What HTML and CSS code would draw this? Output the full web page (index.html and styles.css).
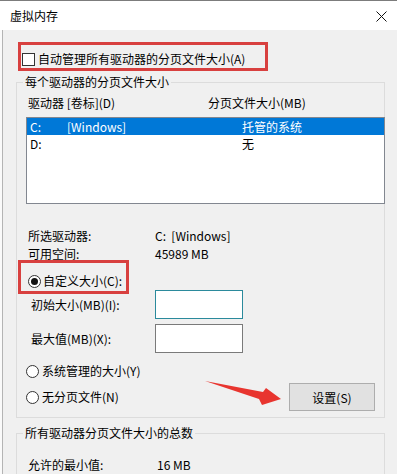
FILE: index.html
```html
<!DOCTYPE html>
<html lang="zh-CN">
  <head>
    <meta charset="UTF-8" />
    <meta name="viewport" content="width=device-width, initial-scale=1.0" />
    <title>虚拟内存</title>
    <link rel="stylesheet" href="styles.css">
  </head>
  <body>
    <div class="dialog">
      <div class="titlebar">
        <span class="title">虚拟内存</span>
        <svg class="close-icon" width="11" height="11" viewBox="0 0 11 11">
          <path d="M0.5 0.5 L10.5 10.5 M10.5 0.5 L0.5 10.5" stroke="#111" stroke-width="1" fill="none"/>
        </svg>
      </div>

      <div class="content">
        <div class="highlight auto-manage">
          <span class="checkbox"></span>
          <span>自动管理所有驱动器的分页文件大小(A)</span>
        </div>

        <fieldset class="group">
          <legend>每个驱动器的分页文件大小</legend>
          <div class="group-body">
            <div class="list-header">
              <span class="col-drive">驱动器 [卷标](D)</span>
              <span>分页文件大小(MB)</span>
            </div>

            <div class="listbox">
              <div class="list-row selected">
                <span>C:</span>
                <span>[Windows]</span>
                <span>托管的系统</span>
              </div>
              <div class="list-row">
                <span>D:</span>
                <span></span>
                <span>无</span>
              </div>
            </div>

            <div class="info-row first">
              <span class="info-label">所选驱动器:</span>
              <span>C:&nbsp;&nbsp;[Windows]</span>
            </div>
            <div class="info-row">
              <span class="info-label">可用空间:</span>
              <span>45989 MB</span>
            </div>

            <div class="highlight custom-size">
              <span class="radio checked"></span>
              <span>自定义大小(C):</span>
            </div>

            <div class="field-row initial">
              <span class="field-label">初始大小(MB)(I):</span>
              <span class="textbox focused"></span>
            </div>
            <div class="field-row">
              <span class="field-label">最大值(MB)(X):</span>
              <span class="textbox"></span>
            </div>

            <div class="option-row first">
              <span class="radio"></span>
              <span>系统管理的大小(Y)</span>
            </div>
            <div class="option-row last">
              <div class="option">
                <span class="radio"></span>
                <span>无分页文件(N)</span>
              </div>
              <button class="button">设置(S)</button>
            </div>
          </div>
        </fieldset>

        <fieldset class="group totals">
          <legend>所有驱动器分页文件大小的总数</legend>
          <div class="group-body">
            <div class="info-row total-row">
              <span class="total-label">允许的最小值:</span>
              <span>16 MB</span>
            </div>
          </div>
        </fieldset>
      </div>

      <!-- annotation arrow pointing at the button -->
      <svg class="arrow" width="90" height="32" viewBox="0 0 90 32">
        <polygon points="5,3 63,14 66,10 81,21 62,27 59,21" fill="#e8352f"/>
      </svg>
    </div>
  </body>
</html>
```

FILE: styles.css
```css
body {
  margin: 0;
  width: 397px;
  height: 474px;
  overflow: hidden;
  background: #fafafa;
  font-family: "Noto Sans CJK SC", "Noto Sans", sans-serif;
  font-size: 12px;
  line-height: 18px;
  color: #000;
}

.dialog {
  position: relative;
  height: 474px;
}

.titlebar {
  height: 29px;
  border-top: 1px solid #7c7c7c;
  background: #fff;
  display: flex;
  align-items: center;
  justify-content: space-between;
  padding: 0 10px 0 10px;
}

.title {
  font-size: 12px;
  line-height: 18px;
  padding-top: 1px;
}

.close-icon {
  display: block;
  margin-top: 1px;
}

.content {
  margin-left: 2px;
  border-left: 1px solid #b4b4b4;
  background: #f0f0f0;
  height: 444px;
  padding: 12px 12px 0 13px;
}

.highlight {
  border: 3px solid #d8403f;
  box-sizing: border-box;
  display: flex;
  align-items: center;
}

.auto-manage {
  width: 250px;
  height: 29px;
  margin-left: 2px;
  padding: 5px 0 0 1px;
  align-items: flex-start;
  gap: 3px;
}

.checkbox {
  width: 13px;
  height: 13px;
  box-sizing: border-box;
  border: 1px solid #333;
  background: #fff;
  margin-top: 3px;
}

.group {
  border: 1px solid #dcdcdc;
  margin: 2px 0 0;
  padding: 0;
  min-width: 0;
}

.group legend {
  margin-left: 6px;
  padding: 0 2px;
  line-height: 18px;
}

.group-body {
  padding: 0 9px 6px 11px;
}

.list-header {
  display: flex;
  margin-top: 3px;
}

.col-drive {
  width: 180px;
}

.listbox {
  margin: 5px -10px 0 -2px;
  height: 87px;
  box-sizing: border-box;
  border: 1px solid #828790;
  background: #fff;
}

.list-row {
  display: grid;
  grid-template-columns: 37px 175px 1fr;
  height: 17px;
  line-height: 17px;
  padding-left: 3px;
}

.list-row.selected {
  background: #0078d7;
  color: #fff;
}

.info-row {
  display: flex;
}

.info-row.first {
  margin-top: 23px;
}

.info-label {
  width: 127px;
}

.custom-size {
  width: 111px;
  height: 34px;
  margin: -3px 0 0 -10px;
  padding: 9px 0 1px 7px;
  gap: 2px;
}

.radio {
  width: 13px;
  height: 13px;
  box-sizing: border-box;
  border: 1px solid #333;
  border-radius: 50%;
  background: #fff;
  display: flex;
  align-items: center;
  justify-content: center;
}

.radio.checked::after {
  content: "";
  width: 7px;
  height: 7px;
  border-radius: 50%;
  background: #111;
}

.field-row {
  display: flex;
  align-items: center;
  margin-top: 5px;
}

.field-row.initial {
  margin-top: -4px;
}

.field-label {
  width: 124px;
  padding-left: 3px;
}

.textbox {
  width: 88px;
  height: 29px;
  box-sizing: border-box;
  border: 1px solid #7a7a7a;
  background: #fff;
}

.textbox.focused {
  border-color: #2b8a9c;
}

.option-row,
.option {
  display: flex;
  align-items: center;
  gap: 3px;
}

.option-row {
  margin-left: -2px;
}

.option-row.first {
  margin-top: 9px;
}

.option-row.last {
  margin-top: 3px;
  justify-content: space-between;
}

.button {
  width: 86px;
  height: 28px;
  background: #e1e1e1;
  border: 1px solid #adadad;
  font-family: inherit;
  font-size: 12px;
  color: #000;
  padding: 0;
}

.totals {
  margin-top: 6px;
}

.total-row {
  margin-top: 14px;
}

.total-label {
  width: 129px;
}

.arrow {
  position: absolute;
  left: 200px;
  top: 378px;
}
```
